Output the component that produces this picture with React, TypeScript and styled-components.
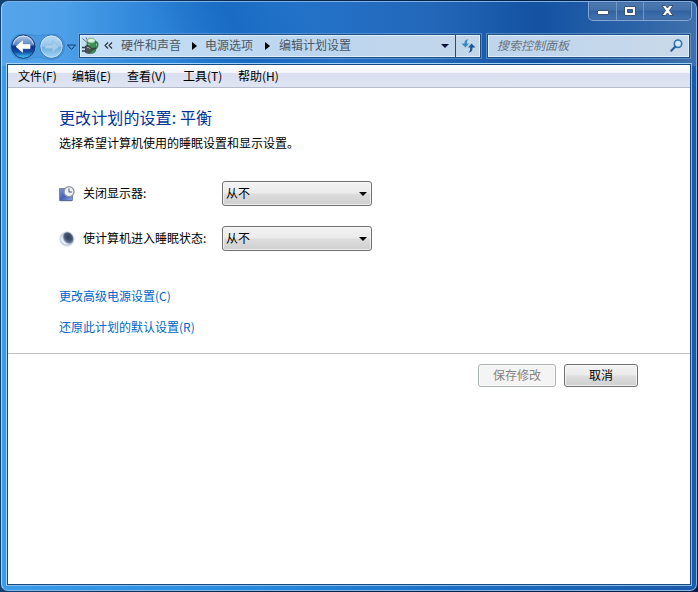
import React from 'react';
import styled, { createGlobalStyle } from 'styled-components';

const GlobalStyle = createGlobalStyle`
  * { box-sizing: border-box; }
  body { margin: 0; background: #06254e; }
`;

const Desktop = styled.div`
  width: 698px;
  height: 592px;
  padding: 1px;
  overflow: hidden;
  background: linear-gradient(90deg, #0f4273, #06264f 40%, #04204a);
  font: 12px/18px "Noto Sans CJK SC", sans-serif;
  color: #000;
`;

const Window = styled.div`
  display: flex;
  flex-direction: column;
  width: 696px;
  height: 590px;
  border: 1px solid #a9d2f3;
  border-top-color: #7fb0e0;
  border-right-color: #86b4e2;
  border-bottom-color: #86b6e6;
  border-radius: 7px;
  padding: 0 4px 4px;
  background:
    linear-gradient(60deg, #0b57ae00 24%, #0b57ae66 35%, #0b57ae00 46%) 0 0 / 100% 64px no-repeat,
    linear-gradient(90deg, #55a5ea 0, #4c9fe8 9%, #3088db 20%, #2379d1 32%, #2370c6 48%, #2367b9 62%, #1452a2 77%, #255fa7 88%, #3f70aa 100%) 0 0 / 100% 64px no-repeat,
    linear-gradient(90deg, #3a9bea 0, #268be0 35%, #1c6fc4 65%, #1b5aa8 100%);
`;

const TitleBar = styled.div`
  display: flex;
  justify-content: flex-end;
  flex: none;
  height: 31px;
`;

const CaptionButtons = styled.div`
  display: flex;
  width: 104px;
  height: 19px;
  border: 1px solid #86a8d2;
  border-top: 0;
  border-radius: 0 0 5px 5px;
  background: linear-gradient(#4f7ab0, #4170aa 45%, #3161a0 50%, #4474af);
  box-shadow: inset 0 0 0 1px #2c558d55;
`;

const CaptionButton = styled.div<{ $width: number }>`
  display: flex;
  align-items: center;
  justify-content: center;
  width: ${p => p.$width}px;
  padding-bottom: 1px;
  border-right: 1px solid #7297c5;
  &:last-child { border-right: 0; }
`;

const NavBar = styled.div`
  display: flex;
  flex: none;
  height: 30px;
  padding: 1px 2px 0 4px;
`;

const NavButtons = styled.div`
  width: 69px;
  height: 28px;
  svg { display: block; }
`;

const Field = styled.div<{ $width: number }>`
  display: flex;
  align-items: center;
  width: ${p => p.$width}px;
  height: 24px;
  border: 1px solid #1d4e86;
  box-shadow: inset 0 0 0 1px #e1effa, 0 0 0 1px #80b1e088;
  background: linear-gradient(90deg, #c4def5, #bcd6ef 60%, #c3d6ea);
  color: #4b5866;
`;

const AddressBar = styled(Field)`
  padding-left: 2px;
  margin-right: 6px;
`;

const Crumb = styled.span<{ $width: number }>`
  width: ${p => p.$width}px;
  padding-bottom: 3px;
  white-space: nowrap;
`;

const Slot = styled.span<{ $width: number }>`
  display: flex;
  width: ${p => p.$width}px;
  flex: none;
`;

const Refresh = styled.div`
  display: flex;
  align-items: center;
  justify-content: center;
  width: 25px;
  height: 22px;
  margin-left: auto;
  border-left: 1px solid #1d4e86;
`;

const SearchField = styled(Field)`
  justify-content: space-between;
  padding: 0 6px 2px 9px;
  background: linear-gradient(90deg, #bed5ee, #c9d9e9);
  font-style: italic;
  color: #68737f;
`;

const Client = styled.div`
  display: flex;
  flex: 1;
  flex-direction: column;
  border: 1px solid #a6d4f5;
  border-right-color: #8bb8e5;
  border-bottom-color: #8bbbe8;
`;

const ClientInner = styled.div`
  flex: 1;
  border: 1px solid #154a80;
  background: #fff;
`;

const MenuBar = styled.div`
  display: flex;
  height: 23px;
  padding: 2px 0 0 10px;
  border-bottom: 1px solid #b5bdcd;
  background: linear-gradient(#fff 0, #f3f5fb 35%, #d9dfef 39%, #dfe5f3 100%);
`;

const MenuItem = styled.div<{ $width: number }>`
  width: ${p => p.$width}px;
  white-space: nowrap;
`;

const Settings = styled.div`
  height: 266px;
  padding: 17px 0 0 51px;
  border-bottom: 1px solid #c1c1c1;
`;

const Heading = styled.h1`
  height: 28px;
  margin: 0;
  font-size: 16px;
  font-weight: 400;
  line-height: 24px;
  letter-spacing: 0.1px;
  color: #003399;
`;

const Description = styled.p`
  height: 48px;
  margin: 0;
  line-height: 20px;
`;

const SettingRow = styled.div`
  display: flex;
  align-items: center;
  height: 25px;
  margin-bottom: 20px;
`;

const Label = styled.label`
  width: 139px;
  padding-bottom: 2px;
  white-space: nowrap;
`;

const Dropdown = styled.div`
  display: flex;
  align-items: center;
  justify-content: space-between;
  width: 150px;
  height: 25px;
  padding: 0 4px 0 3px;
  border: 1px solid #707070;
  border-radius: 3px;
  background: linear-gradient(#f2f2f2, #ebebeb 48%, #dddddd 52%, #cfcfcf);
  box-shadow: inset 0 0 0 1px #fafafabb;
`;

const Value = styled.span`
  padding-bottom: 2px;
`;

const Links = styled.div`
  display: flex;
  flex-direction: column;
  align-items: flex-start;
  gap: 13px;
  padding-top: 16px;
`;

const Link = styled.a`
  color: #0066cc;
`;

const Actions = styled.div`
  display: flex;
  justify-content: flex-end;
  gap: 8px;
  padding: 10px 52px 0 0;
`;

const Button = styled.button<{ $width: number }>`
  width: ${p => p.$width}px;
  height: 23px;
  padding: 0 0 2px;
  border: 1px solid #707070;
  border-radius: 3px;
  background: linear-gradient(#f2f2f2, #ebebeb 48%, #dddddd 52%, #cfcfcf);
  box-shadow: inset 0 0 0 1px #fafafacc;
  font: inherit;
  color: #000;
  &:disabled {
    border-color: #adb2b5;
    background: #f4f4f4;
    color: #838383;
  }
`;

const DownArrow = ({ fill = '#000' }: { fill?: string }) => (
  <svg width="8" height="4" viewBox="0 0 8 4"><path d="M0 0h8L4 4z" fill={fill} /></svg>
);

const RightArrow = () => (
  <svg width="5" height="8" viewBox="0 0 5 8"><path d="M0 0l5 4-5 4z" fill="#000" /></svg>
);

const NavigationIcon = () => (
  <svg width="69" height="28" viewBox="0 0 69 28">
    <defs>
      <linearGradient id="back" x1="0" y1="0" x2="0" y2="1">
        <stop offset="0" stopColor="#b4cdec" /><stop offset=".42" stopColor="#5b85c4" />
        <stop offset=".5" stopColor="#0b3187" /><stop offset=".72" stopColor="#124ca4" /><stop offset="1" stopColor="#48d0fa" />
      </linearGradient>
      <linearGradient id="forward" x1="0" y1="0" x2="0" y2="1">
        <stop offset="0" stopColor="#b9dcf6" /><stop offset=".48" stopColor="#97c5ec" />
        <stop offset=".53" stopColor="#70addf" /><stop offset="1" stopColor="#a4d8f8" />
      </linearGradient>
    </defs>
    <path d="M13.500 0C22 0 22 1.500 27.500 1.500S35 0 41.500 0c8 0 13 5 13 12.500s-5 13-13 13c-6 0-8-2-14-2s-6 2-14 2C5.500 25.500 .5 20.500 .5 12.500S5.500 0 13.500 0z" fill="#3888d0" fillOpacity=".35" stroke="#276db5" strokeOpacity=".3" />
    <circle cx="13.300" cy="12.600" r="11.700" fill="url(#back)" stroke="#153c79" />
    <path d="M3.300 10a10.300 10.300 0 0 1 20 0" fill="none" stroke="#e1edfa" strokeOpacity=".75" />
    <path d="M6 12.600L12.500 7v3.600H20v4h-7.500v3.600z" fill="#fff" stroke="#fff" strokeWidth=".7" strokeLinejoin="round" />
    <circle cx="41.500" cy="12.600" r="11.700" fill="url(#forward)" stroke="#397ab6" />
    <circle cx="41.500" cy="12.600" r="10.600" fill="none" stroke="#d2eafa" strokeOpacity=".7" />
    <path d="M49 12.600L42.500 7v3.600H35v4h7.500v3.600z" fill="#aacdec" stroke="#8dbce2" strokeWidth=".7" />
    <path d="M57.500 11h8l-4 4.500z" fill="#5b9edc" stroke="#0c3e79" />
  </svg>
);

const PowerIcon = () => (
  <svg width="17" height="18" viewBox="0 0 17 18">
    <path d="M.5 1.500l4 3.500M4 .5l2 3.500" fill="none" stroke="#64717d" strokeWidth="1" />
    <path d="M12 5c3-.5 4 1 3.500 3.500S14 12 11.500 12" fill="none" stroke="#347849" strokeWidth="1.800" />
    <path d="M5 4c.5-3 7.500-3.500 8.500 0v10c-1 3-6.500 3-8.500 1z" fill="#39924f" stroke="#2b663b" strokeWidth=".7" />
    <ellipse cx="9.300" cy="3.600" rx="3.900" ry="2.400" fill="#d9eedb" stroke="#78a884" strokeWidth=".7" />
    <path d="M7 7v3" stroke="#86c992" strokeWidth="1.500" />
    <path d="M0 10.500h4M0 14h4" stroke="#333f40" strokeWidth="1.300" />
    <path d="M3.500 9c3-1 5 0 6 2.500l4-.5-1 1.500-3 1c-1 3-3 3.500-6 2z" fill="#4a5552" stroke="#2b3533" strokeWidth=".7" />
    <path d="M5 10.500c1.500-.5 2.500.3 3 1.500" fill="none" stroke="#a4afaa" />
  </svg>
);

const RefreshIcon = () => (
  <svg width="15" height="14" viewBox="0 0 15 14">
    <path d="M7.500.5C4 .5 3.500 2.500 3.500 4.500H.5L4.500 8.500 8 4.500H5.800C5.800 2.500 6 1.500 7.500.5z" fill="#3789c2" />
    <path d="M7.500 13.500c3.500 0 4-2.500 4-5h3L10.500 4.500 7 8.500h2.200c0 2.500-.2 3.500-1.700 5z" fill="#1d5790" />
  </svg>
);

const SearchIcon = () => (
  <svg width="13" height="13" viewBox="0 0 13 13">
    <circle cx="8" cy="4.700" r="3.700" fill="#d4e9f8" stroke="#3172ad" strokeWidth="1.600" />
    <path d="M5.300 7.500L1.300 11.700" stroke="#285d94" strokeWidth="2" strokeLinecap="round" />
  </svg>
);

const DisplayIcon = () => (
  <svg width="16" height="16" viewBox="0 0 16 16">
    <defs>
      <linearGradient id="screen" x1="0" y1="0" x2="1" y2="1">
        <stop offset="0" stopColor="#8298d4" /><stop offset=".5" stopColor="#4361b8" /><stop offset="1" stopColor="#8ba6e4" />
      </linearGradient>
    </defs>
    <path d="M.5 2.500h13v12H.5z" fill="url(#screen)" stroke="#7484ae" />
    <path d="M1 14.700h12" stroke="#56658d" />
    <circle cx="10" cy="5.700" r="5" fill="#eef1f5" stroke="#8a929b" strokeWidth="1.300" />
    <path d="M10 2.500V6h3" fill="none" stroke="#59626c" strokeWidth="1.100" />
  </svg>
);

const MoonIcon = () => (
  <svg width="16" height="16" viewBox="0 0 16 16">
    <defs>
      <radialGradient id="sleep" cx=".55" cy=".45">
        <stop offset=".1" stopColor="#344159" /><stop offset=".65" stopColor="#46546d" /><stop offset="1" stopColor="#73839e" />
      </radialGradient>
    </defs>
    <circle cx="8" cy="8" r="7.200" fill="#c2cfe1" stroke="#d5dee9" />
    <ellipse cx="9.300" cy="6.900" rx="4.700" ry="6" transform="rotate(-32 9.300 6.900)" fill="url(#sleep)" />
    <path d="M3.700 4.500c-1 4 1.500 7.500 5.500 8.500-3.500.8-6.500-1-7-4.500-.1-1.600.6-3 1.500-4z" fill="#f0f6fc" />
  </svg>
);

const menus = [['文件(F)', 54], ['编辑(E)', 55], ['查看(V)', 56], ['工具(T)', 55], ['帮助(H)', 60]] as const;

const PowerSetting = ({ icon, label }: { icon: React.ReactNode; label: string }) => (
  <SettingRow>
    <Slot $width={24}>{icon}</Slot>
    <Label>{label}</Label>
    <Dropdown><Value>从不</Value><DownArrow /></Dropdown>
  </SettingRow>
);

export default function App() {
  return (
    <>
      <GlobalStyle />
      <Desktop>
        <Window>
          <TitleBar>
            <CaptionButtons>
              <CaptionButton $width={28}>
                <svg width="12" height="8" viewBox="0 0 12 8"><rect x=".5" y="3.500" width="11" height="4" rx=".5" fill="#fff" stroke="#3c5272" /></svg>
              </CaptionButton>
              <CaptionButton $width={27}>
                <svg width="12" height="10" viewBox="0 0 12 10"><path fillRule="evenodd" d="M.5.500h11v9H.5zM3.500 3.500v3h5v-3z" fill="#fff" stroke="#3c5272" /></svg>
              </CaptionButton>
              <CaptionButton $width={47}>
                <svg width="13" height="11" viewBox="0 0 13 11"><path d="M1 .5h3.500l2 2.500 2-2.500H12L8.500 5.500l3.500 5H8.500L6.500 8l-2 2.500H1l3.500-5z" fill="#fff" stroke="#3c5272" /></svg>
              </CaptionButton>
            </CaptionButtons>
          </TitleBar>
          <NavBar>
            <NavButtons><NavigationIcon /></NavButtons>
            <AddressBar $width={402}>
              <Slot $width={22}><PowerIcon /></Slot>
              <Slot $width={17}>
                <svg width="9" height="9" viewBox="0 0 9 9"><path d="M4 .5l-3 3 3 3M8 .5l-3 3 3 3" fill="none" stroke="#202b38" strokeWidth="1.100" /></svg>
              </Slot>
              <Crumb $width={71}>硬件和声音</Crumb>
              <Slot $width={13}><RightArrow /></Slot>
              <Crumb $width={60}>电源选项</Crumb>
              <Slot $width={14}><RightArrow /></Slot>
              <Crumb $width={162}>编辑计划设置</Crumb>
              <DownArrow fill="#050f36" />
              <Refresh><RefreshIcon /></Refresh>
            </AddressBar>
            <SearchField $width={203}>
              搜索控制面板
              <SearchIcon />
            </SearchField>
          </NavBar>
          <Client>
            <ClientInner>
              <MenuBar>
                {menus.map(([name, width]) => <MenuItem key={name} $width={width}>{name}</MenuItem>)}
              </MenuBar>
              <Settings>
                <Heading>更改计划的设置: 平衡</Heading>
                <Description>选择希望计算机使用的睡眠设置和显示设置。</Description>
                <PowerSetting icon={<DisplayIcon />} label="关闭显示器:" />
                <PowerSetting icon={<MoonIcon />} label="使计算机进入睡眠状态:" />
                <Links>
                  <Link>更改高级电源设置(C)</Link>
                  <Link>还原此计划的默认设置(R)</Link>
                </Links>
              </Settings>
              <Actions>
                <Button $width={78} disabled>保存修改</Button>
                <Button $width={74}>取消</Button>
              </Actions>
            </ClientInner>
          </Client>
        </Window>
      </Desktop>
    </>
  );
}
